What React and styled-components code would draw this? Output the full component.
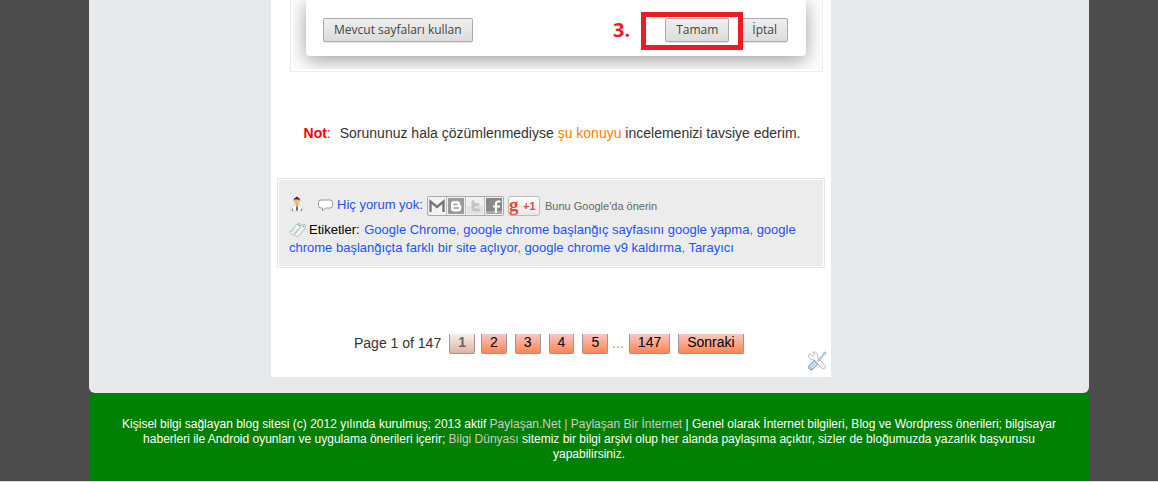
import React from 'react';
import styled, { createGlobalStyle } from 'styled-components';

const GlobalStyle = createGlobalStyle`
  * {
    box-sizing: border-box;
  }
  body {
    margin: 0;
    background-color: #4c4c4c;
    color: #333;
    font-family: 'Liberation Sans', Arial, sans-serif;
    font-size: 14px;
  }
`;

const PageWrapper = styled.div`
  padding: 0 69px 0 89px;
  border-bottom: 1px solid #d8d8d8;
`;

const Main = styled.main`
  display: grid;
  grid-template-columns: 182fr 560fr 258fr;
  padding-bottom: 16px;
  border-radius: 0 0 6px 6px;
  background-color: #e8e9eb;
`;

const PostColumn = styled.article`
  grid-column: 2;
  min-width: 0;
  padding: 0 4px 6px 6px;
  background-color: #fff;
`;

const Figure = styled.div`
  margin: 0 4px 0 13px;
  padding: 0 2px 2px;
  border: 1px solid #eee;
  border-top: none;
`;

const FigureInner = styled.div`
  overflow: hidden;
  padding: 0 14px 13px 13px;
`;

const Dialog = styled.div`
  display: flex;
  align-items: center;
  padding: 18px 18px 14px 17px;
  border-radius: 0 0 4px 4px;
  background-color: #fff;
  box-shadow: 0 4px 20px rgba(0, 0, 0, 0.4);
`;

const DialogButton = styled.button`
  height: 24px;
  padding: 0 10px;
  border: 1px solid #aaa;
  border-radius: 2px;
  background: linear-gradient(#efefef, #dcdcdc);
  box-shadow: 0 1px 1px rgba(0, 0, 0, 0.1);
  color: #444;
  font-family: 'Open Sans', sans-serif;
  font-size: 12px;
  line-height: 22px;
`;

const StepNumber = styled.span`
  margin-left: auto;
  margin-right: 35px;
  color: #ed1c24;
  font-family: 'Open Sans', sans-serif;
  font-size: 20px;
  font-weight: bold;
  line-height: 24px;
`;

const Highlighted = styled.span`
  position: relative;
  display: flex;
  margin-right: 12px;

  &::after {
    content: '';
    position: absolute;
    z-index: 1;
    top: -6px;
    right: -14px;
    bottom: -8px;
    left: -24px;
    border: 5px solid #ed1c24;
    pointer-events: none;
  }
`;

const Note = styled.p`
  margin: 51px 0 35px;
  line-height: 20px;
  text-align: center;
`;

const NoteLabel = styled.span`
  margin-right: 9px;
  color: #f00;
`;

const NoteLink = styled.a`
  color: #ff8000;
  text-decoration: none;
`;

const PostFooter = styled.div`
  margin-right: 2px;
  padding: 1px;
  border: 1px solid #e8e8e8;
`;

const PostFooterInner = styled.div`
  padding: 14px 20px 9px 10px;
  background-color: #ececec;
  color: #777;
  font-size: 13px;
  line-height: 18px;
`;

const ActionRow = styled.div`
  display: flex;
  align-items: center;
  height: 22px;
  margin-bottom: 5px;
`;

const AuthorIcon = styled.svg`
  margin: 0 13px 2px 0;
`;

const CommentIcon = styled.svg`
  margin-right: 4px;
`;

const BlueLink = styled.a`
  color: #1a53ff;
  text-decoration: none;
`;

const ShareButtons = styled.div`
  display: flex;
  margin: 2px 4px 0;
  border: 1px solid #aaa;
  border-radius: 2px;
  background-color: #f2f2f2;
`;

const ShareButton = styled.button`
  display: flex;
  padding: 0;
  border: none;
  border-left: ${(props) => (props.$first ? 'none' : '1px solid #bbb')};
  background: none;
`;

const PlusOne = styled.button`
  display: flex;
  align-items: center;
  height: 20px;
  margin: 2px 5px 0 0;
  padding: 0;
  width: 32px;
  border: 1px solid #bbb;
  border-radius: 3px;
  background: linear-gradient(#fdfdfd, #e8e8e8);
  color: #dd4b39;
  font-family: 'Liberation Sans', Arial, sans-serif;
  font-size: 11px;
  font-weight: bold;
`;

const PlusOneG = styled.span`
  width: 14px;
  padding-bottom: 3px;
  font-family: 'Liberation Serif', serif;
  font-size: 19px;
  line-height: 14px;
  text-align: left;
`;

const PlusOneText = styled.span`
  margin-top: 2px;
  color: #666;
  font-size: 11px;
`;

const Labels = styled.div`
  min-height: 36px;
`;

const TagIcon = styled.svg`
  margin-right: 3px;
  vertical-align: -4px;
`;

const LabelsTitle = styled.span`
  margin-right: 1px;
  color: #000;
`;

const Pager = styled.nav`
  display: flex;
  align-items: center;
  margin: 66px 0 0 77px;
  height: 20px;
`;

const PagerText = styled.span`
  margin-right: 8px;
  padding-bottom: 3px;
  line-height: 18px;
`;

const Dots = styled.span`
  margin: 0 5px 0 -4px;
  padding-bottom: 3px;
  color: #c90;
`;

const PagerItem = styled.a`
  height: 20px;
  margin-right: ${(props) => (props.$current ? '6px' : '8px')};
  padding: 0 8px;
  border: 1px solid #999;
  border-top: none;
  border-radius: 0 0 2px 2px;
  background: ${(props) =>
    props.$current ? 'linear-gradient(#f8efec, #dfb39d)' : 'linear-gradient(#fac8c4, #ff8450)'};
  color: ${(props) => (props.$current ? '#666' : '#000')};
  font-weight: ${(props) => (props.$current ? 'bold' : 'normal')};
  line-height: 17px;
  text-decoration: none;
`;

const ToolsLink = styled.a`
  display: flex;
  justify-content: flex-end;
  margin-top: -3px;
`;

const SiteFooter = styled.footer`
  padding: 24px 24px 19px;
  background-color: #008000;
  color: #fff;
  font-size: 12px;
  line-height: 15px;
  text-align: center;
`;

const FooterLink = styled.a`
  color: #ccc;
  text-decoration: none;
`;

const pages = ['1', '2', '3', '4', '5'];

const labels = [
  'Google Chrome',
  'google chrome başlanğıç sayfasını google yapma',
  'google chrome başlanğıçta farklı bir site açlıyor',
  'google chrome v9 kaldırma',
  'Tarayıcı',
];

const Author = () => (
  <AuthorIcon width="16" height="16" viewBox="0 0 16 16" aria-hidden="true">
    <path d="M2 15c0-4 2-6 6-6s6 2 6 6z" fill="#f9f9f9" stroke="#ccc" strokeWidth=".6" />
    <path d="M3.500 12.500V15M12.500 12.500V15" stroke="#888" />
    <path d="M7.400 10h1.200l.4 4-1 1-1-1z" fill="#555" />
    <path d="M6.500 7h3v2L8 10.500 6.500 9z" fill="#e5a968" />
    <circle cx="8" cy="5" r="2.800" fill="#efb978" />
    <path d="M4.800 5C4.500 2.500 6 1.600 7 1.500L8 .3l.8 1.200q2.600.5 2.400 3.500l-.9-1.500-4.300-.3z" fill="#2b2420" />
  </AuthorIcon>
);

const Comment = () => (
  <CommentIcon width="15" height="13" viewBox="0 0 15 13" aria-hidden="true">
    <path
      d="M3 1h9q2.500 0 2.500 2.500v3Q14.500 9 12 9H7.500L4.500 12V9H3Q.5 9 .5 6.500v-3Q.5 1 3 1z"
      fill="#fff"
      stroke="#999"
    />
  </CommentIcon>
);

const Tags = () => (
  <TagIcon width="17" height="16" viewBox="0 0 17 16" aria-hidden="true">
    <path d="M5.500 12.500L12.500 3l3.500-.5.3 3.500-7 8.500-1.500.3z" fill="#edf5f5" stroke="#9bb0b0" strokeWidth=".8" />
    <path d="M.7 10.500L7.500 2.500 11 1.500 11.500 5 4.500 13.500z" fill="#f5fafa" stroke="#92a8a8" strokeWidth=".8" />
    <path d="M3 10l4-4.500M4.500 11.500l4-4.500" stroke="#c3d3d3" />
    <circle cx="9.800" cy="3.500" r=".8" fill="#7f9999" />
    <circle cx="14.500" cy="4.500" r=".8" fill="#7f9999" />
  </TagIcon>
);

const Tools = () => (
  <svg width="20" height="20" viewBox="0 0 20 20" aria-hidden="true">
    <path
      d="M2.500 2.500l3 2.500 2-1.500L6 1q3-.6 4.500 2 .6 1.500 0 3l7.500 8.500q1 1.500-.3 2.700-1.400 1.200-2.900 0L7 9Q3 9.500 1.800 6.500q-.5-2 .7-4z"
      fill="#fafafa"
      stroke="#b4b4b4"
      strokeWidth=".9"
    />
    <path d="M10 10l6-6.500 1.200-2.200 1.800-.3-.2 1.800-2 1.200-5.800 7" fill="#dce8f5" stroke="#8fa5c4" strokeWidth=".8" />
    <path d="M7 9.500l4 3.500-5 5.200q-2 1.300-3.700-.2-1.500-1.700-.2-3.500z" fill="#b8cbe4" stroke="#7f96b8" strokeWidth=".9" />
    <path d="M3.500 15.500L8 11M5 17l4.500-4.500" stroke="#e3edf8" />
  </svg>
);

const shareIcons = [
  {
    name: 'E-posta',
    art: (
      <>
        <path d="M1 3h16v12H1z" fill="#f4f4f4" />
        <path d="M2.500 15V4.500L9 10l6.500-5.500V15" fill="none" stroke="#777" strokeWidth="2.400" />
      </>
    ),
  },
  {
    name: 'Blogger',
    art: (
      <>
        <rect x="1" y="1" width="16" height="16" rx="1" fill="#999" />
        <path
          d="M7 4h3q3 0 3 3 0 1.200 1.300 1.200V11q0 3.500-3.500 3.500H7.500Q4 14.500 4 11V7q0-3 3-3z"
          fill="#fff"
        />
        <path d="M7 7.500h3M7 11h4.500" stroke="#999" strokeWidth="1.500" strokeLinecap="round" />
      </>
    ),
  },
  {
    name: 'Twitter',
    art: (
      <>
        <rect x="1" y="1" width="16" height="16" fill="#f0f0f0" />
        <path d="M1 9h16v8H1z" fill="#e2e2e2" />
        <path
          d="M7 4.500v6q0 2.500 2.500 2.500H12.500M7 7.500h5"
          fill="none"
          stroke="#c4c4c4"
          strokeWidth="3"
          strokeLinecap="round"
        />
      </>
    ),
  },
  {
    name: 'Facebook',
    art: (
      <>
        <rect x="1" y="1" width="16" height="16" fill="#888" />
        <path d="M1 14h16v3H1z" fill="#aaa" />
        <path d="M11 16V7q0-2.500 2.500-2.500H15.500M8 9.500h7" fill="none" stroke="#fff" strokeWidth="2.200" />
      </>
    ),
  },
];

const App = () => {
  return (
    <>
      <GlobalStyle />
      <PageWrapper>
        <Main>
          <PostColumn>
            <Figure>
              <FigureInner>
                <Dialog>
                  <DialogButton type="button">Mevcut sayfaları kullan</DialogButton>
                  <StepNumber>3.</StepNumber>
                  <Highlighted>
                    <DialogButton type="button">Tamam</DialogButton>
                  </Highlighted>
                  <DialogButton type="button">İptal</DialogButton>
                </Dialog>
              </FigureInner>
            </Figure>
            <Note>
              <NoteLabel>
                <b>Not</b>:
              </NoteLabel>
              Sorununuz hala çözümlenmediyse <NoteLink href="#konu">şu konuyu</NoteLink> incelemenizi
              tavsiye ederim.
            </Note>
            <PostFooter>
              <PostFooterInner>
                <ActionRow>
                  <Author />
                  <Comment />
                  <BlueLink href="#yorum">Hiç yorum yok:</BlueLink>
                  <ShareButtons>
                    {shareIcons.map((icon, index) => (
                      <ShareButton
                        key={icon.name}
                        type="button"
                        aria-label={icon.name}
                        $first={index === 0}
                      >
                        <svg width="18" height="18" viewBox="0 0 18 18">
                          {icon.art}
                        </svg>
                      </ShareButton>
                    ))}
                  </ShareButtons>
                  <PlusOne type="button">
                    <PlusOneG>g</PlusOneG>+1
                  </PlusOne>
                  <PlusOneText>Bunu Google'da önerin</PlusOneText>
                </ActionRow>
                <Labels>
                  <Tags />
                  <LabelsTitle>Etiketler:</LabelsTitle>{' '}
                  {labels.map((label, index) => (
                    <React.Fragment key={label}>
                      {index > 0 && ', '}
                      <BlueLink href="#etiket">{label}</BlueLink>
                    </React.Fragment>
                  ))}
                </Labels>
              </PostFooterInner>
            </PostFooter>
            <Pager>
              <PagerText>Page 1 of 147</PagerText>
              {pages.map((page) => (
                <PagerItem key={page} href="#sayfa" $current={page === '1'}>
                  {page}
                </PagerItem>
              ))}
              <Dots>...</Dots>
              <PagerItem href="#sayfa">147</PagerItem>
              <PagerItem href="#sayfa">Sonraki</PagerItem>
            </Pager>
            <ToolsLink href="#duzenle" aria-label="Düzenle">
              <Tools />
            </ToolsLink>
          </PostColumn>
        </Main>
        <SiteFooter>
          Kişisel bilgi sağlayan blog sitesi (c) 2012 yılında kurulmuş; 2013 aktif{' '}
          <FooterLink href="#paylasan">Paylaşan.Net | Paylaşan Bir İnternet</FooterLink> | Genel
          olarak İnternet bilgileri, Blog ve Wordpress önerileri; bilgisayar haberleri ile Android
          oyunları ve uygulama önerileri içerir; <FooterLink href="#bilgi">Bilgi Dünyası</FooterLink>{' '}
          sitemiz bir bilgi arşivi olup her alanda paylaşıma açıktır, sizler de bloğumuzda yazarlık
          başvurusu yapabilirsiniz.
        </SiteFooter>
      </PageWrapper>
    </>
  );
};

export default App;
